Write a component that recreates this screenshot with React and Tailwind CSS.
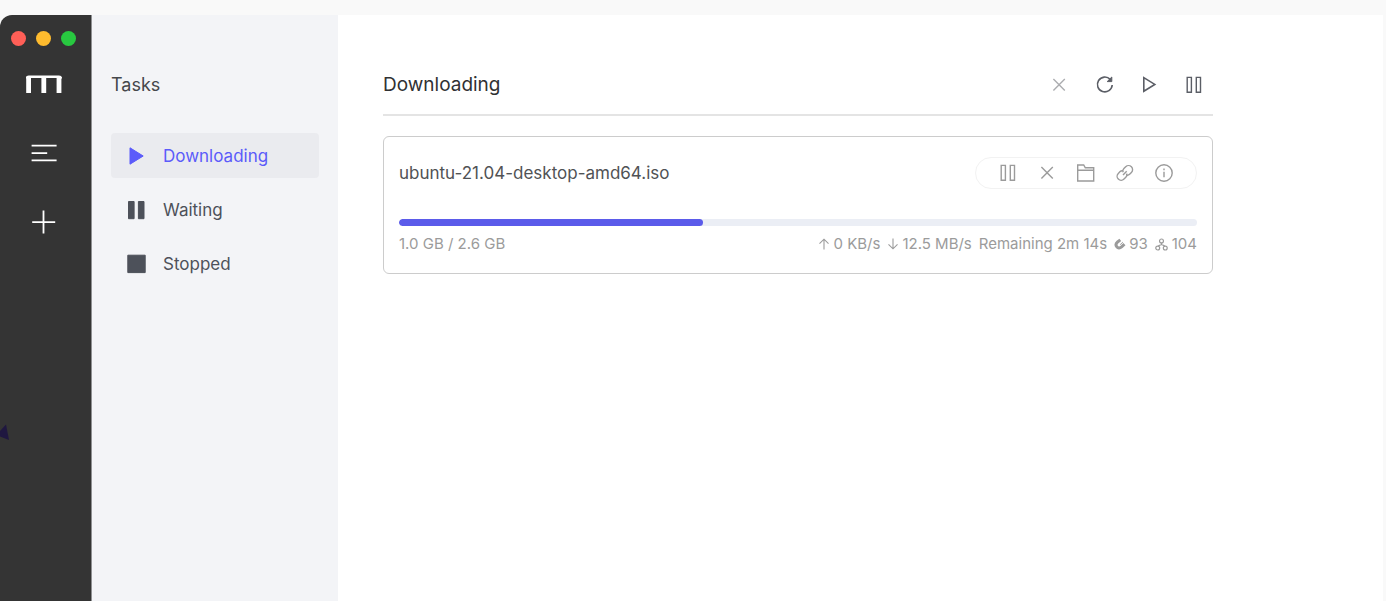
import { useState } from 'react';

const NAV_ITEMS = [
  { id: 'downloading', label: 'Downloading' },
  { id: 'waiting', label: 'Waiting' },
  { id: 'stopped', label: 'Stopped' }
];

const task = {
  name: 'ubuntu-21.04-desktop-amd64.iso',
  completed: '1.0 GB',
  total: '2.6 GB',
  progress: 38.1,
  upload: '0 KB/s',
  download: '12.5 MB/s',
  remaining: '2m 14s',
  seeders: 93,
  connections: 104
};

const NavIcon = ({ id }) => (
  <svg viewBox="0 0 20 20" className="w-5 h-5" fill="currentColor" stroke="currentColor" strokeLinejoin="round" aria-hidden="true">
    {id === 'downloading' && <path d="M3 1.8v16.4L16.2 10z" />}
    {id === 'waiting' && <path d="M1.5 1.5h5.6v17.2H1.5zM11.4 1.5H17v17.2h-5.6z" />}
    {id === 'stopped' && <path d="M.8 1.2h17.4v17.4H.8z" />}
  </svg>
);

const Icon = ({ children, className = 'w-5 h-5' }) => (
  <svg viewBox="0 0 20 20" className={className} fill="none" stroke="currentColor" strokeWidth="1.4" aria-hidden="true">
    {children}
  </svg>
);

const PauseIcon = () => (
  <Icon>
    <path d="M3.2 2.4h4.2v14.8H3.2zM12.3 2.4h4.2v14.8h-4.2z" />
  </Icon>
);

const CloseIcon = () => (
  <Icon>
    <path d="M4.4 4l11.4 11.4M15.8 4L4.4 15.4" />
  </Icon>
);

const IconButton = ({ label, className = '', children }) => (
  <button type="button" aria-label={label} className={`w-5 h-5 flex items-center justify-center ${className}`}>
    {children}
  </button>
);

const Rail = () => (
  <aside className="relative w-[92px] shrink-0 bg-[#343434] rounded-tl-xl border-r border-[#8f9092] pt-4 pr-1 flex flex-col items-center text-white">
    <div className="flex gap-[10px]">
      <span className="w-[15px] h-[15px] rounded-full bg-[#ff5f57]" />
      <span className="w-[15px] h-[15px] rounded-full bg-[#febb2e]" />
      <span className="w-[15px] h-[15px] rounded-full bg-[#28c840]" />
    </div>

    <svg viewBox="0 0 36 18" className="w-9 h-[18px] mt-[29px]" fill="none" stroke="currentColor" aria-hidden="true">
      <path d="M1 3.4Q1 1.7 2.8 1.7H33Q34.8 1.7 34.8 3.4" strokeWidth="2.6" />
      <path d="M2.6 18V2.6M17.8 18V2M33 18V2.6" strokeWidth="4.8" />
    </svg>

    <button type="button" aria-label="Task list" className="w-10 h-10 mt-10 flex items-center justify-center">
      <svg viewBox="0 0 26 20" className="w-[26px] h-5" fill="none" stroke="currentColor" strokeWidth="1.8" aria-hidden="true">
        <path d="M.6 2.7h25M.6 10.2h15.6M.6 17.4h25" />
      </svg>
    </button>
    <button type="button" aria-label="Add task" className="w-10 h-10 mt-[29px] flex items-center justify-center">
      <svg viewBox="0 0 24 24" className="w-6 h-6" fill="none" stroke="currentColor" strokeWidth="1.8" aria-hidden="true">
        <path d="M11.5 .6v23M.2 12.2h23" />
      </svg>
    </button>

    {/* Decorative corner shape */}
    <svg viewBox="0 0 9 16" className="absolute left-0 top-[409px] w-[9px] h-4" fill="#1f1740" aria-hidden="true">
      <path d="M0 7L6 .5 9 16 0 12.5z" />
    </svg>
  </aside>
);

const TaskCard = ({ item }) => (
  <article className="mt-5 px-[15px] pt-5 pb-[19px] border border-[#cccccc] rounded-md">
    <div className="flex items-center justify-between">
      <h2 className="text-[17px] leading-6 text-[#505255]">{item.name}</h2>
      <div className="h-8 px-[22px] flex items-center gap-[19px] border border-[#f2f2f2] rounded-full text-[#9b9b9b]">
        <IconButton label="Pause task"><PauseIcon /></IconButton>
        <IconButton label="Delete task"><CloseIcon /></IconButton>
        <IconButton label="Show in folder">
          <Icon>
            <path d="M1.7 18V2h6l1.6 2.8h8.4V18zM1.7 7.2h16" />
          </Icon>
        </IconButton>
        <IconButton label="Copy link">
          <Icon>
            <path d="M8.1 9.2C7.5 7.8 7.9 6.6 8.9 5.6l1.8-1.8a4 4 0 0 1 5.7 5.7l-1.8 1.8c-.8.8-1.9 1.1-3 .8M11.6 10.6c.6 1.4.2 2.7-.8 3.7L9 16.1a4 4 0 0 1-5.7-5.7l1.8-1.8c.8-.8 1.9-1.1 3-.8M8 11.9l3.7-3.7" />
          </Icon>
        </IconButton>
        <IconButton label="Task details">
          <Icon>
            <circle cx="10" cy="10" r="8.2" />
            <path d="M10 8.8v5.4M10 5.4v1.8" />
          </Icon>
        </IconButton>
      </div>
    </div>

    <div className="mt-[30px] h-[7px] rounded-full bg-[#ebeef5] overflow-hidden">
      <div className="h-full rounded-full bg-[#5b5bea]" style={{ width: `${item.progress}%` }} />
    </div>

    <div className="mt-2 flex justify-between text-[15px] leading-5 text-[#9b9b9b]">
      <span>{item.completed} / {item.total}</span>
      <div className="flex gap-[7px]">
        <span className="flex items-center gap-[3px]">
          <Icon className="w-3 h-3">
            <path d="M10 19V2M2.5 9.5L10 2l7.5 7.5" strokeWidth="1.8" />
          </Icon>
          {item.upload}
        </span>
        <span className="flex items-center gap-[3px]">
          <Icon className="w-3 h-3">
            <path d="M10 1v17M2.5 10.5L10 18l7.5-7.5" strokeWidth="1.8" />
          </Icon>
          {item.download}
        </span>
        <span>Remaining {item.remaining}</span>
        <span className="flex items-center gap-[3px]">
          <Icon className="w-3 h-3">
            <path d="M10.5 3.2L6 6.6C-.2 12.2 6.6 20 12.6 14.8L17.4 10.2" strokeWidth="5" />
            <path d="M10.2 11.2l4.6-4.4" strokeWidth="1.6" />
          </Icon>
          {item.seeders}
        </span>
        <span className="flex items-center gap-1">
          <Icon className="w-[13px] h-[13px]">
            <circle cx="10" cy="4.5" r="3" strokeWidth="1.8" />
            <circle cx="4.2" cy="15.4" r="3" strokeWidth="1.8" />
            <circle cx="15.8" cy="15.4" r="3" strokeWidth="1.8" />
            <path d="M10 7.7v2.5M4.8 12.2L10 10l5.2 2.2" strokeWidth="1.8" />
          </Icon>
          {item.connections}
        </span>
      </div>
    </div>
  </article>
);

const App = () => {
  const [active, setActive] = useState('downloading');

  return (
    <div className="min-h-screen bg-[#f9f9f9] pt-[15px] pr-[3px] flex font-['Inter',sans-serif]">
      <Rail />

      {/* Task navigation */}
      <nav className="w-[246px] shrink-0 bg-[#f3f4f7] px-[19px] pt-14">
        <h1 className="text-lg leading-7 text-[#45474b]">Tasks</h1>
        <ul className="mt-[34px] flex flex-col gap-[9px]">
          {NAV_ITEMS.map(item => (
            <li key={item.id}>
              <button
                type="button"
                onClick={() => setActive(item.id)}
                className={`w-full h-[45px] pl-4 flex items-center gap-4 rounded text-[17px] leading-6
                  ${active === item.id ? 'bg-[#eaebef] text-[#5b5bfa]' : 'text-[#4d515a]'}`}
              >
                <NavIcon id={item.id} />
                {item.label}
              </button>
            </li>
          ))}
        </ul>
      </nav>

      {/* Task list */}
      <main className="flex-1 min-w-0 bg-white px-[45px] pt-14">
        <div className="max-w-[830px]">
          <header className="flex items-center justify-between pb-[15px] border-b-2 border-[#e4e4e4]">
            <h2 className="text-[19px] leading-7 text-[#303133]">{NAV_ITEMS.find(item => item.id === active).label}</h2>
            <div className="flex items-center gap-[25px] pr-[9px] text-[#5b5e66]">
              <IconButton label="Delete selected tasks" className="text-[#acadb0]"><CloseIcon /></IconButton>
              <IconButton label="Refresh">
                <Icon>
                  <path d="M18.2 10A7.4 7.4 0 1 1 16.2 4.4" strokeWidth="1.6" />
                  <path d="M17.8 2v4.6h-4.6z" fill="currentColor" strokeWidth="1" />
                </Icon>
              </IconButton>
              <IconButton label="Resume all">
                <Icon>
                  <path d="M4.8 2.6v13.6L15.8 9.4z" strokeWidth="1.6" />
                </Icon>
              </IconButton>
              <IconButton label="Pause all"><PauseIcon /></IconButton>
            </div>
          </header>

          <TaskCard item={task} />
        </div>
      </main>
    </div>
  );
};

export default App;
